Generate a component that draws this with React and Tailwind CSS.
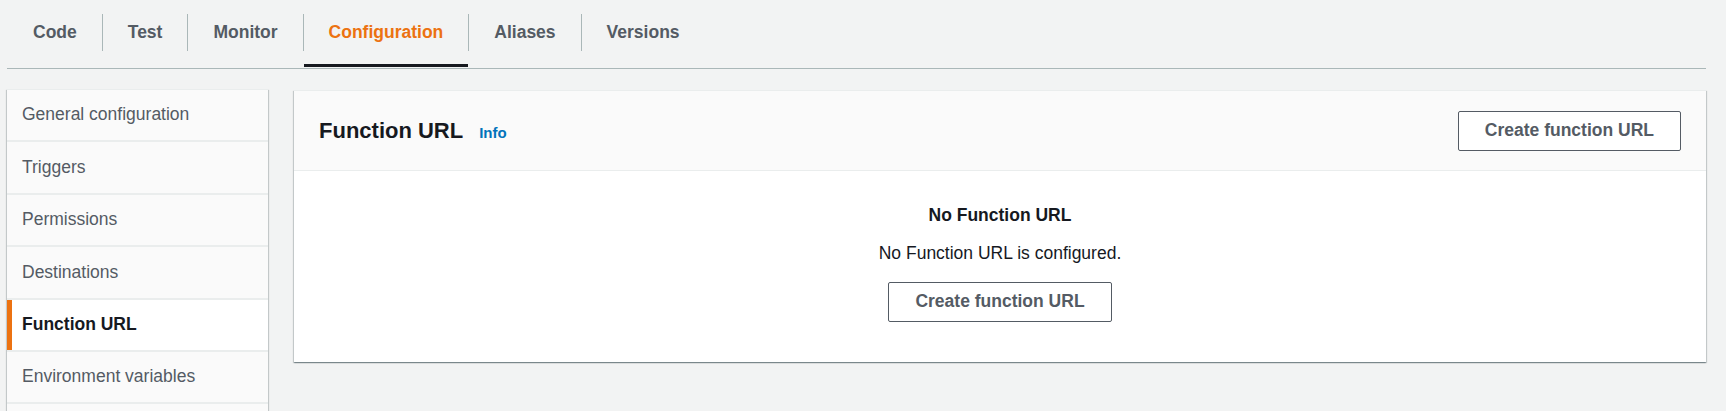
import React from "react";

const tabs = ["Code", "Test", "Monitor", "Configuration", "Aliases", "Versions"];
const navItems = [
  "General configuration",
  "Triggers",
  "Permissions",
  "Destinations",
  "Function URL",
  "Environment variables",
];

function Button() {
  return (
    <button className="h-[40px] px-[26px] rounded-[2px] border border-[#545b64] bg-white text-[17.5px] font-bold leading-none text-[#545b64]">
      Create function URL
    </button>
  );
}

export default function App() {
  return (
    <div className="h-[411px] w-[1726px] overflow-hidden bg-[#f2f3f3] pl-[7px] pr-[20px] font-['Liberation_Sans',Arial,sans-serif]">
      {/* Tabs */}
      <div className="flex pl-px">
        {tabs.map((t, i) => (
          <React.Fragment key={t}>
            {i > 0 && <div className="mt-[14px] h-[37px] w-px bg-[#aab7b8]" />}
            <div className="flex flex-col">
              <div
                className={
                  "mt-[14px] flex h-[37px] items-center px-[25px] text-[17.5px] font-bold leading-none " +
                  (t === "Configuration" ? "text-[#ec7211]" : "text-[#545b64]")
                }
              >
                {t}
              </div>
              <div
                className={
                  "mt-[13px] h-[3px] " + (t === "Configuration" ? "bg-[#16191f]" : "bg-transparent")
                }
              />
            </div>
          </React.Fragment>
        ))}
      </div>
      <div className="mt-px h-px bg-[#aab7b8]" />

      {/* Main */}
      <div className="mt-[20px] flex gap-[26px]">
        {/* Sidebar */}
        <div className="flex w-[261px] shrink-0 flex-col gap-[2px] border-t border-[#eaeded] bg-[#eaeded] shadow-[0_1px_1px_0_rgba(0,28,36,0.3),1px_1px_1px_0_rgba(0,28,36,0.15),-1px_1px_1px_0_rgba(0,28,36,0.15)]">
          {navItems.map((n) =>
            n === "Function URL" ? (
              <div
                key={n}
                className="flex h-[50.4px] items-center border-l-[5px] border-[#ec7211] bg-white pl-[10px] text-[17.5px] font-bold leading-none text-[#16191f]"
              >
                {n}
              </div>
            ) : (
              <div
                key={n}
                className="flex h-[50.4px] items-center bg-[#fafafa] pl-[15px] text-[17.5px] leading-none text-[#545b64]"
              >
                {n}
              </div>
            )
          )}
          <div className="h-[50.4px] bg-[#fafafa]" />
        </div>

        {/* Card */}
        <div className="mt-px flex-1 self-start border-t border-[#eaeded] bg-white shadow-[0_1px_1px_0_rgba(0,28,36,0.3),1px_1px_1px_0_rgba(0,28,36,0.15),-1px_1px_1px_0_rgba(0,28,36,0.15)]">
          <div className="flex h-[80px] items-center justify-between border-b border-[#eaeded] bg-[#fafafa] px-[25px]">
            <div className="flex items-baseline gap-[16px]">
              <h2 className="text-[22px] font-bold leading-none text-[#16191f]">Function URL</h2>
              <span className="text-[15px] font-bold leading-none text-[#0073bb]">Info</span>
            </div>
            <Button />
          </div>
          <div className="flex flex-col items-center pt-[33px] pb-[40px] text-center">
            <div className="text-[17.5px] font-bold leading-[22px] text-[#16191f]">No Function URL</div>
            <div className="mt-[16px] text-[17.5px] leading-[22px] text-[#16191f]">
              No Function URL is configured.
            </div>
            <div className="mt-[18px]">
              <Button />
            </div>
          </div>
        </div>
      </div>
    </div>
  );
}
